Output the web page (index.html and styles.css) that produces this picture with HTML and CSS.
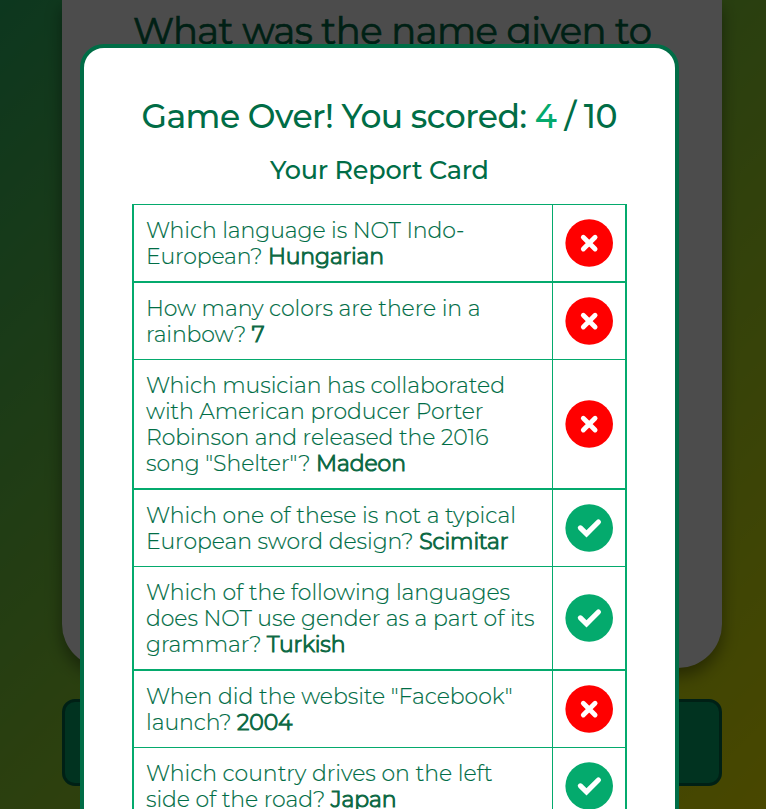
FILE: index.html
```html
<!DOCTYPE html>
<html lang="en">
<head>
<meta charset="utf-8">
<title>Trivia</title>
<link rel="stylesheet" href="styles.css">
</head>
<body>
<svg class="defs" aria-hidden="true">
  <symbol id="no" viewBox="0 0 48 48"><circle cx="24.2" cy="24" r="23.8" fill="#f00"/><path d="M18.3 18.2 30.1 30M30.1 18.2 18.3 30" fill="none" stroke="#fff" stroke-width="4.8" stroke-linecap="round"/></symbol>
  <symbol id="yes" viewBox="0 0 48 48"><circle cx="24.2" cy="24" r="23.8" fill="#04aa6d"/><path d="M15.4 23.9 21.5 29.8 33.4 18" fill="none" stroke="#fff" stroke-width="5.2" stroke-linecap="round"/></symbol>
</svg>
<main class="game">
  <section class="question"><h1 class="fit" data-width="519">What was the name given to</h1></section>
  <div class="answer"></div>
</main>
<div class="overlay">
  <section class="modal">
    <h2><span class="fit" data-width="476">Game Over! You scored: <em>4</em> / 10</span></h2>
    <h3><span class="fit" data-width="219">Your Report Card</span></h3>
    <div class="report">
      <div class="row thick"><p><span class="fit" data-width="318.5">Which language is NOT Indo-</span><span class="fit" data-width="238">European? <b>Hungarian</b></span></p><div class="mark"><svg><use href="#no"/></svg></div></div>
      <div class="row"><p><span class="fit" data-width="334.5">How many colors are there in a</span><span class="fit" data-width="118.5">rainbow? <b>7</b></span></p><div class="mark"><svg><use href="#no"/></svg></div></div>
      <div class="row thick"><p><span class="fit" data-width="359">Which musician has collaborated</span><span class="fit" data-width="337.5">with American producer Porter</span><span class="fit" data-width="342.5">Robinson and released the 2016</span><span class="fit" data-width="260">song "Shelter"? <b>Madeon</b></span></p><div class="mark"><svg><use href="#no"/></svg></div></div>
      <div class="row"><p><span class="fit" data-width="370">Which one of these is not a typical</span><span class="fit" data-width="362.5">European sword design? <b>Scimitar</b></span></p><div class="mark"><svg><use href="#yes"/></svg></div></div>
      <div class="row thick"><p><span class="fit" data-width="364">Which of the following languages</span><span class="fit" data-width="388.5">does NOT use gender as a part of its</span><span class="fit" data-width="199.5">grammar? <b>Turkish</b></span></p><div class="mark"><svg><use href="#yes"/></svg></div></div>
      <div class="row"><p><span class="fit" data-width="366.5">When did the website "Facebook"</span><span class="fit" data-width="146.5">launch? <b>2004</b></span></p><div class="mark"><svg><use href="#no"/></svg></div></div>
      <div class="row"><p><span class="fit" data-width="346.5">Which country drives on the left</span><span class="fit" data-width="250.5">side of the road? <b>Japan</b></span></p><div class="mark"><svg><use href="#yes"/></svg></div></div>
    </div>
  </section>
</div>
<script src="fit.js"></script>
</body>
</html>
```
FILE: fit.js
```js
// Tracks each line of text out to its measure.
document.querySelectorAll('.fit').forEach(function (line) {
  var target = Number(line.dataset.width);
  var count = line.textContent.length;
  var gap = (target - line.getBoundingClientRect().width) / (count - 1);
  line.style.letterSpacing = gap + 'px';
  line.style.marginRight = -gap + 'px';
});
```
FILE: styles.css
```css
* { box-sizing: border-box; }
html, body { height: 100%; }
body {
  margin: 0;
  overflow: hidden;
  font-family: Montserrat, Inter, "Open Sans", sans-serif;
  color: #006d46;
  background: linear-gradient(135deg, #2cb968 0%, #f4f000 100%);
}
h1, h2, h3, p { margin: 0; }
.defs { position: absolute; width: 0; height: 0; }
.fit { display: block; width: max-content; white-space: nowrap; }

.game { height: 809px; padding: 0 44px 0 62px; overflow: hidden; }
.question {
  height: 668px;
  padding: 9px 0 0 71px;
  background: #fff;
  border-radius: 0 0 44px 44px;
  box-shadow: 0 8px 16px rgba(0, 0, 0, .4);
}
.question h1 { font-size: 37px; line-height: 44px; font-weight: 400; -webkit-text-stroke: .7px; }
.answer {
  height: 87px;
  margin-top: 31px;
  border: 3px solid #006d46;
  border-radius: 13px;
  background: #04aa6d;
}

.overlay { position: fixed; inset: 0; padding: 44px 87px 0 80px; background: rgba(0, 0, 0, .7); }
.modal {
  height: 900px;
  padding: 46px 48px 0;
  background: #fff;
  border: 4px solid #006d46;
  border-radius: 24px;
}
.modal h2, .modal h3 { display: flex; justify-content: center; font-weight: 500; }
.modal h2 { font-size: 33px; line-height: 44px; }
.modal h2 em { font-style: normal; color: #04aa6d; }
.modal h3 { margin-top: 15px; font-size: 25.5px; line-height: 34px; }

.report { margin-top: 17px; border: solid #04aa6d; border-width: 1px 2px 0; }
.row { display: grid; grid-template-columns: 1fr 73px; border-bottom: 1px solid #04aa6d; }
.row.thick { border-bottom-width: 2px; }
.row p { padding: 13px 12px 11px; font-size: 22px; line-height: 26px; font-weight: 300; -webkit-text-stroke: .15px; }
.row b { font-weight: 300; -webkit-text-stroke: 1.1px #0f6a45; }
.mark { display: flex; align-items: center; justify-content: center; border-left: 1px solid #04aa6d; }
.mark svg { width: 48px; height: 48px; }
```
